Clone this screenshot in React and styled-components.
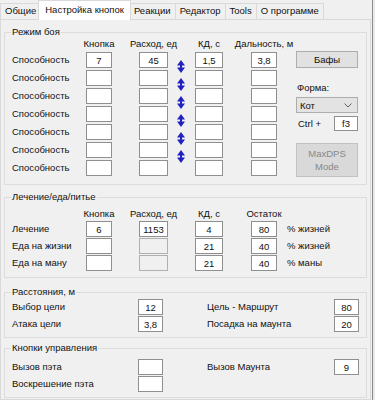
import React from 'react';
import styled, { createGlobalStyle } from 'styled-components';

const GlobalStyle = createGlobalStyle`
  html, body {
    margin: 0;
    background: #f0f0f0;
  }
  body {
    font-family: "Liberation Sans", Arial, sans-serif;
    font-size: 9.5px;
    color: #111;
  }
`;

const Window = styled.div`
  display: flex;
  width: 375px;
  height: 400px;
  overflow: hidden;
`;

const Main = styled.div`
  width: 371px;
  flex: none;
  display: flex;
  flex-direction: column;
`;

const Edge = styled.div`
  flex: 1;
  margin-left: 1px;
  border-left: 1px solid #8c8c8c;
  background: #e9e9e9;
`;

const TabBar = styled.div`
  display: flex;
  align-items: flex-end;
  height: 19px;
  position: relative;
  z-index: 1;
`;

const Tab = styled.div`
  box-sizing: border-box;
  height: ${(p) => (p.$active ? 20 : 16)}px;
  margin: ${(p) => (p.$active ? '0 -2px -1px -2px' : '0 -1px 0 0')};
  padding: 0 ${(p) => (p.$active ? 6 : 4)}px;
  border: 1px solid #d9d9d9;
  border-bottom: none;
  background: ${(p) => (p.$active ? '#fff' : '#f0f0f0')};
  line-height: ${(p) => (p.$active ? 17 : 14)}px;
  white-space: nowrap;
  position: relative;
  z-index: ${(p) => (p.$active ? 2 : 1)};
`;

const Panel = styled.div`
  flex: 1;
  border: 1px solid #d9d9d9;
  background: #f0f0f0;
  padding: 6px 3px 0;
  display: flex;
  flex-direction: column;
`;

const Group = styled.fieldset`
  margin: ${(p) => p.$mt || 0}px 0 0;
  padding: ${(p) => p.$pt}px 7px ${(p) => p.$pb}px;
  border: 1px solid #dcdcdc;
  min-width: 0;
  display: flex;
  align-items: flex-start;
`;

const Legend = styled.legend`
  padding: 0 1px;
  margin-left: -1px;
  height: 12px;
  line-height: 12px;
`;

const Col = styled.div`
  flex: none;
  display: flex;
  flex-direction: column;
  gap: ${(p) => p.$gap}px;
  width: ${(p) => p.$w}px;
  margin-left: ${(p) => p.$ml || 0}px;
`;

const Head = styled.div`
  display: flex;
  justify-content: center;
  white-space: nowrap;
  height: 12px;
  line-height: 12px;
  padding-top: ${(p) => p.$top || 0}px;
`;

const Label = styled.div`
  height: 16px;
  line-height: 16px;
  white-space: nowrap;
`;

const Field = styled.input`
  box-sizing: border-box;
  width: 100%;
  height: ${(p) => p.$h || 16}px;
  margin: 0;
  padding: 0 2px;
  border: 1px solid ${(p) => (p.disabled ? '#b0b0b0' : '#8f8f8f')};
  border-radius: 0;
  background: ${(p) => (p.disabled ? '#f0f0f0' : '#fff')};
  font: inherit;
  color: #111;
  text-align: center;
  outline: none;
`;

const ArrowCol = styled.div`
  flex: none;
  width: 8px;
  margin-left: 9px;
  padding-top: 22px;
  display: flex;
  flex-direction: column;
  gap: 5px;

  svg {
    display: block;
  }
`;

const SideCol = styled.div`
  flex: none;
  width: 62px;
  margin-left: 19px;
  display: flex;
  flex-direction: column;
`;

const WinButton = styled.button`
  box-sizing: border-box;
  width: 100%;
  height: ${(p) => p.$h}px;
  margin: ${(p) => p.$mt}px 0 0;
  padding: 0;
  border: 1px solid ${(p) => (p.disabled ? '#c2c2c2' : '#adadad')};
  border-radius: 0;
  background: ${(p) => (p.disabled ? '#d9d9d9' : '#e1e1e1')};
  color: ${(p) => (p.disabled ? '#888' : '#111')};
  font: inherit;
  line-height: 13px;
`;

const SideLabel = styled.div`
  margin-top: 14px;
  padding-left: 1px;
  height: 12px;
  line-height: 12px;
`;

const Select = styled.div`
  box-sizing: border-box;
  margin-top: 3px;
  height: 16px;
  padding: 0 5px 0 3px;
  display: flex;
  align-items: center;
  justify-content: space-between;
  background: #e3e3e3;
  border: 1px solid #adadad;
`;

const HotkeyRow = styled.div`
  margin-top: 3px;
  height: 15px;
  display: flex;
  align-items: center;
  justify-content: space-between;
  padding-left: 2px;
`;

const HotkeyBox = styled.div`
  width: 24px;
`;

const SpinArrow = () => (
  <svg width="8" height="13" viewBox="0 0 8 13">
    <path d="M4 0 L8 5.5 L5 5.5 L5 7.5 L8 7.5 L4 13 L0 7.5 L3 7.5 L3 5.5 L0 5.5 Z" fill="#2222c0" />
  </svg>
);

const Chevron = () => (
  <svg width="8" height="5" viewBox="0 0 8 5">
    <polyline points="0.5,0.5 4,4 7.5,0.5" fill="none" stroke="#606060" strokeWidth="1" />
  </svg>
);

const tabs = ['Общие', 'Настройка кнопок', 'Реакции', 'Редактор', 'Tools', 'О программе'];

const combat = [
  ['7', '45', '1,5', '3,8'],
  ['', '', '', ''],
  ['', '', '', ''],
  ['', '', '', ''],
  ['', '', '', ''],
  ['', '', '', ''],
  ['', '', '', ''],
];

const healing = [
  { name: 'Лечение', key: '6', cost: '1153', cd: '4', rest: '80', unit: '% жизней' },
  { name: 'Еда на жизни', key: '', cost: '', cd: '21', rest: '40', unit: '% жизней', off: true },
  { name: 'Еда на ману', key: '', cost: '', cd: '21', rest: '40', unit: '% маны', off: true },
];

const PairGroup = ({ title, mt, pt, pb, left, right }) => (
  <Group $mt={mt} $pt={pt} $pb={pb}>
    <Legend>{title}</Legend>
    <Col $w={126} $gap={1}>
      {left.map(([name]) => (
        <Label key={name}>{name}</Label>
      ))}
    </Col>
    <Col $w={25} $gap={1}>
      {left.map(([name, v]) => (
        <Field key={name} defaultValue={v} />
      ))}
    </Col>
    <Col $w={127} $ml={44} $gap={1}>
      {right.map(([name]) => (
        <Label key={name}>{name}</Label>
      ))}
    </Col>
    <Col $w={25} $gap={1}>
      {right.map(([name, v]) => (
        <Field key={name} defaultValue={v} />
      ))}
    </Col>
  </Group>
);

export default function App() {
  return (
    <Window>
      <GlobalStyle />
      <Main>
        <TabBar>
          {tabs.map((t) => (
            <Tab key={t} $active={t === 'Настройка кнопок'}>
              {t}
            </Tab>
          ))}
        </TabBar>
        <Panel>
          <Group $pt={0} $pb={7}>
            <Legend>Режим боя</Legend>
            <Col $w={74} $gap={2}>
              <Head />
              {combat.map((_, i) => (
                <Label key={i}>Способность</Label>
              ))}
            </Col>
            <Col $w={26} $gap={2}>
              <Head>Кнопка</Head>
              {combat.map((r, i) => (
                <Field key={i} defaultValue={r[0]} />
              ))}
            </Col>
            <Col $w={29} $ml={27} $gap={2}>
              <Head>Расход, ед</Head>
              {combat.map((r, i) => (
                <Field key={i} defaultValue={r[1]} />
              ))}
            </Col>
            <ArrowCol>
              {combat.slice(1).map((_, i) => (
                <SpinArrow key={i} />
              ))}
            </ArrowCol>
            <Col $w={28} $ml={10} $gap={2}>
              <Head>КД, с</Head>
              {combat.map((r, i) => (
                <Field key={i} defaultValue={r[2]} />
              ))}
            </Col>
            <Col $w={26} $ml={28} $gap={2}>
              <Head>Дальность, м</Head>
              {combat.map((r, i) => (
                <Field key={i} defaultValue={r[3]} />
              ))}
            </Col>
            <SideCol>
              <WinButton $h={17} $mt={13}>Бафы</WinButton>
              <SideLabel>Форма:</SideLabel>
              <Select>
                <span>Кот</span>
                <Chevron />
              </Select>
              <HotkeyRow>
                <span>Ctrl +</span>
                <HotkeyBox>
                  <Field $h={15} defaultValue="f3" />
                </HotkeyBox>
              </HotkeyRow>
              <WinButton $h={34} $mt={12} disabled>
                MaxDPS
                <br />
                Mode
              </WinButton>
            </SideCol>
          </Group>

          <Group $mt={6} $pt={0} $pb={6}>
            <Legend>Лечение/еда/питье</Legend>
            <Col $w={74} $gap={1}>
              <Head $top={5} />
              {healing.map((r) => (
                <Label key={r.name}>{r.name}</Label>
              ))}
            </Col>
            <Col $w={26} $gap={1}>
              <Head $top={5}>Кнопка</Head>
              {healing.map((r) => (
                <Field key={r.name} defaultValue={r.key} />
              ))}
            </Col>
            <Col $w={29} $ml={27} $gap={1}>
              <Head $top={5}>Расход, ед</Head>
              {healing.map((r) => (
                <Field key={r.name} defaultValue={r.cost} disabled={r.off} />
              ))}
            </Col>
            <Col $w={28} $ml={27} $gap={1}>
              <Head $top={5}>КД, с</Head>
              {healing.map((r) => (
                <Field key={r.name} defaultValue={r.cd} />
              ))}
            </Col>
            <Col $w={26} $ml={28} $gap={1}>
              <Head $top={5}>Остаток</Head>
              {healing.map((r) => (
                <Field key={r.name} defaultValue={r.rest} />
              ))}
            </Col>
            <Col $w={60} $ml={10} $gap={1}>
              <Head $top={5} />
              {healing.map((r) => (
                <Label key={r.name}>{r.unit}</Label>
              ))}
            </Col>
          </Group>

          <PairGroup
            title="Расстояния, м"
            mt={8}
            pt={1}
            pb={5}
            left={[
              ['Выбор цели', '12'],
              ['Атака цели', '3,8'],
            ]}
            right={[
              ['Цель - Маршрут', '80'],
              ['Посадка на маунта', '20'],
            ]}
          />

          <PairGroup
            title="Кнопки управления"
            mt={4}
            pt={5}
            pb={5}
            left={[
              ['Вызов пэта', ''],
              ['Воскрешение пэта', ''],
            ]}
            right={[['Вызов Маунта', '9']]}
          />
        </Panel>
      </Main>
      <Edge />
    </Window>
  );
}
